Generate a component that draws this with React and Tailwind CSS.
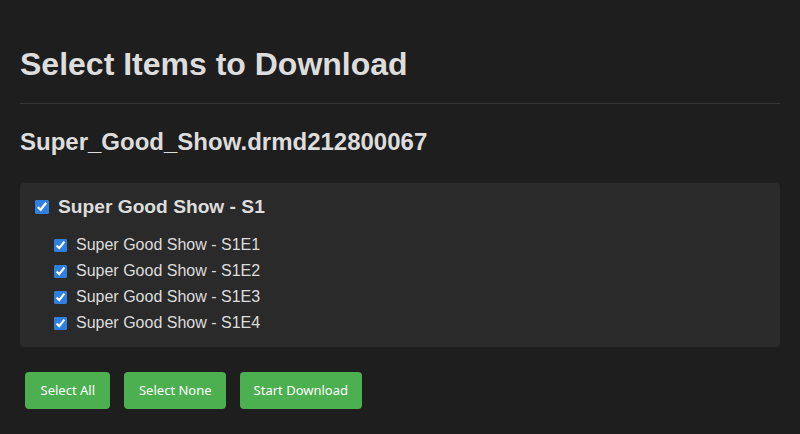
import React from "react";

const items = ["Super Good Show - S1E1", "Super Good Show - S1E2", "Super Good Show - S1E3", "Super Good Show - S1E4"];

export default function App() {
  return (
    <div className="min-h-[434px] bg-[#1e1e1e] text-[#dddddd] px-5 pt-5 pb-5" style={{ fontFamily: '"Liberation Sans", Arial, sans-serif' }}>
      <h1 className="mt-[26px] text-[32px] leading-[37px] font-bold pb-[20px] border-b border-[#333333]">Select Items to Download</h1>
      <h2 className="mt-[24px] text-[24px] leading-[28px] font-bold">Super_Good_Show.drmd212800067</h2>
      <div className="mt-[27px] bg-[#2a2a2a] rounded-[4px] pt-[13px] pb-[11px] px-[15px]">
        <label className="flex items-center h-[22px]">
          <input type="checkbox" defaultChecked className="w-[14px] h-[14px] ml-[0px] mr-[9px] accent-[#2f7fe0]" />
          <span className="text-[19.2px] font-bold">Super Good Show - S1</span>
        </label>
        <div className="mt-[14px] pl-[19px] flex flex-col">
          {items.map((it) => (
            <label key={it} className="flex items-center h-[26px]">
              <input type="checkbox" defaultChecked className="w-[13px] h-[13px] mr-[9px] accent-[#2f7fe0]" />
              <span className="text-[16px]">{it}</span>
            </label>
          ))}
        </div>
      </div>
      <div className="mt-[25px] flex gap-[14px] pl-[5px]" style={{ fontFamily: '"Noto Sans", sans-serif' }}>
        <button className="h-[37px] pt-[1px] px-[15.5px] bg-[#4caf50] text-white text-[13px] rounded-[4px]">Select All</button>
        <button className="h-[37px] pt-[1px] px-[14.5px] bg-[#4caf50] text-white text-[13px] rounded-[4px]">Select None</button>
        <button className="h-[37px] pt-[1px] px-[13.5px] bg-[#4caf50] text-white text-[13px] rounded-[4px]">Start Download</button>
      </div>
    </div>
  );
}
